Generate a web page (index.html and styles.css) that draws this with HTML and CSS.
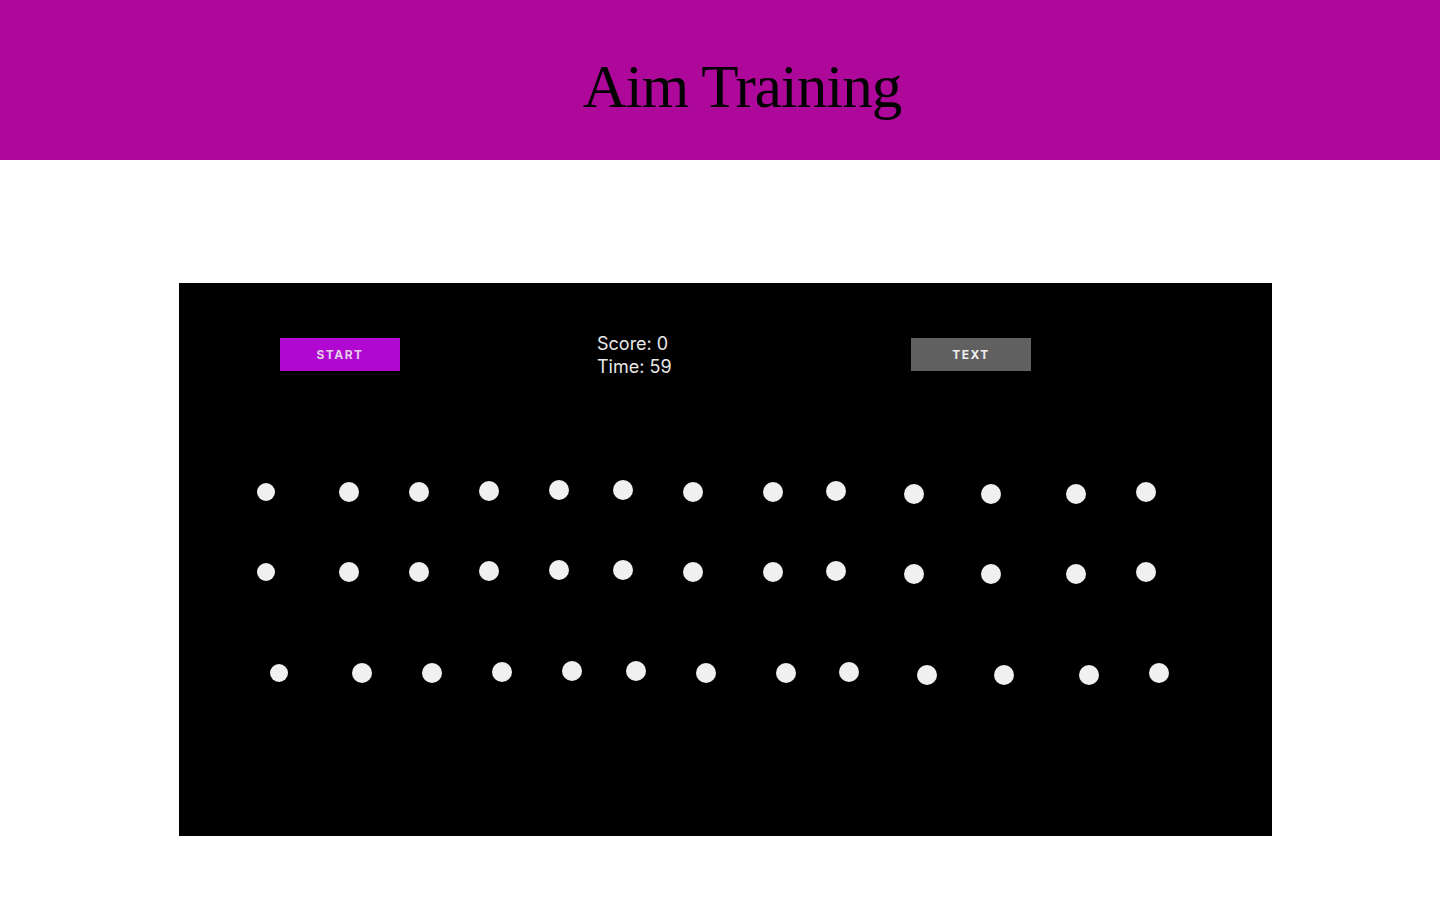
FILE: index.html
```html
<!DOCTYPE html>
<html lang="en">
<head>
<meta charset="utf-8">
<title>Aim Training</title>
<link rel="stylesheet" href="styles.css">
</head>
<body>
<header class="header">
  <h1 class="title">Aim Training</h1>
</header>
<main class="main">
  <section class="board">
    <div class="toolbar">
      <button class="btn btn-start">START</button>
      <div class="stats">
        <div>Score: 0</div>
        <div>Time: 59</div>
      </div>
      <button class="btn btn-text">TEXT</button>
    </div>
    <div class="field">
      <span class="dot small" style="left:78px;top:117px"></span>
      <span class="dot" style="left:160px;top:116px"></span>
      <span class="dot" style="left:230px;top:116px"></span>
      <span class="dot" style="left:300px;top:115px"></span>
      <span class="dot" style="left:370px;top:114px"></span>
      <span class="dot" style="left:434px;top:114px"></span>
      <span class="dot" style="left:504px;top:116px"></span>
      <span class="dot" style="left:584px;top:116px"></span>
      <span class="dot" style="left:647px;top:115px"></span>
      <span class="dot" style="left:725px;top:118px"></span>
      <span class="dot" style="left:802px;top:118px"></span>
      <span class="dot" style="left:887px;top:118px"></span>
      <span class="dot" style="left:957px;top:116px"></span>

      <span class="dot small" style="left:78px;top:197px"></span>
      <span class="dot" style="left:160px;top:196px"></span>
      <span class="dot" style="left:230px;top:196px"></span>
      <span class="dot" style="left:300px;top:195px"></span>
      <span class="dot" style="left:370px;top:194px"></span>
      <span class="dot" style="left:434px;top:194px"></span>
      <span class="dot" style="left:504px;top:196px"></span>
      <span class="dot" style="left:584px;top:196px"></span>
      <span class="dot" style="left:647px;top:195px"></span>
      <span class="dot" style="left:725px;top:198px"></span>
      <span class="dot" style="left:802px;top:198px"></span>
      <span class="dot" style="left:887px;top:198px"></span>
      <span class="dot" style="left:957px;top:196px"></span>

      <span class="dot small" style="left:91px;top:298px"></span>
      <span class="dot" style="left:173px;top:297px"></span>
      <span class="dot" style="left:243px;top:297px"></span>
      <span class="dot" style="left:313px;top:296px"></span>
      <span class="dot" style="left:383px;top:295px"></span>
      <span class="dot" style="left:447px;top:295px"></span>
      <span class="dot" style="left:517px;top:297px"></span>
      <span class="dot" style="left:597px;top:297px"></span>
      <span class="dot" style="left:660px;top:296px"></span>
      <span class="dot" style="left:738px;top:299px"></span>
      <span class="dot" style="left:815px;top:299px"></span>
      <span class="dot" style="left:900px;top:299px"></span>
      <span class="dot" style="left:970px;top:297px"></span>
    </div>
  </section>
</main>
</body>
</html>
```
FILE: styles.css
```css
* { box-sizing: border-box; }

html, body {
  margin: 0;
  padding: 0;
  background: #ffffff;
}

body {
  font-family: Inter, "Noto Sans", sans-serif;
}

.header {
  height: 160px;
  background: #ad089a;
  display: flex;
  align-items: center;
  justify-content: center;
  padding-left: 44px;
}

.title {
  margin: 0;
  font-family: "Liberation Serif", "DejaVu Serif", serif;
  font-weight: normal;
  font-size: 61px;
  letter-spacing: -1px;
  color: #000;
  line-height: 1;
  transform: translateY(6px);
}

.main {
  padding: 123px 0 0 179px;
}

.board {
  width: 1093px;
  height: 553px;
  background: #000;
  display: flex;
  flex-direction: column;
}

.toolbar {
  display: flex;
  align-items: flex-start;
  padding-left: 101px;
  height: 83px;
}

.btn {
  width: 120px;
  height: 33px;
  margin-top: 55px;
  border: none;
  font-family: Inter, "Noto Sans", sans-serif;
  font-weight: 700;
  font-size: 12px;
  letter-spacing: 1.5px;
  padding: 0;
  cursor: pointer;
}

.btn-start {
  background: #b008d0;
  color: #e4cdea;
}

.btn-text {
  background: #606060;
  color: #f0f0f0;
  margin-left: 240px;
}

.stats {
  margin-top: 49px;
  margin-left: 197px;
  width: 74px;
  color: #e8e8e8;
  font-size: 18px;
  line-height: 23px;
  white-space: nowrap;
}

.field {
  position: relative;
  flex: 1;
}

.dot {
  position: absolute;
  width: 20px;
  height: 20px;
  border-radius: 50%;
  background: #f0f0f0;
}

.dot.small {
  width: 18px;
  height: 18px;
}
```
